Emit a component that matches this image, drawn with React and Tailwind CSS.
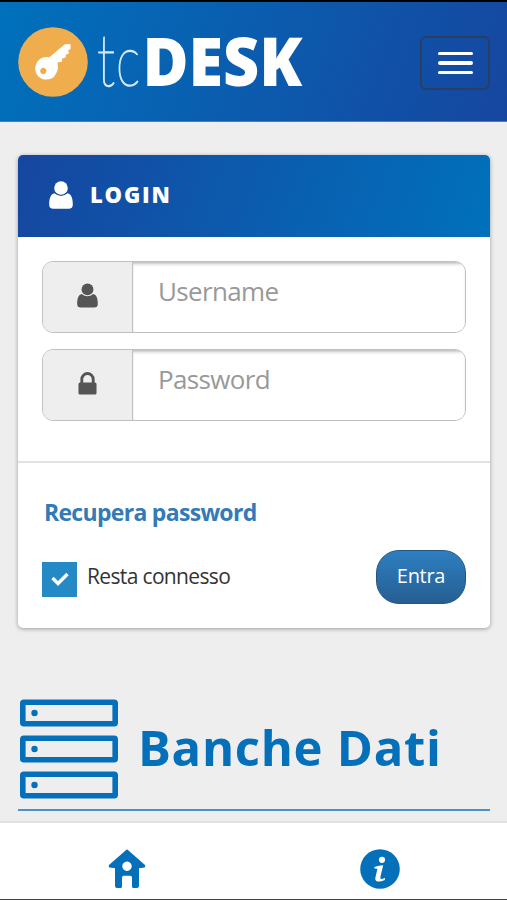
import React, { useState } from 'react';

const UserIcon = ({ className }) => (
  <svg viewBox="0 0 24 28" className={className} fill="currentColor">
    <circle cx="12" cy="7" r="6.8" />
    <path d="M5.4 12.2 C1.6 13 .2 17.4 .2 23.4 Q.2 27.8 4.4 27.8 H19.6 Q23.8 27.8 23.8 23.4 C23.8 17.4 22.4 13 18.6 12.2 Q12 17.6 5.4 12.2 Z" />
  </svg>
);

const LockIcon = ({ className }) => (
  <svg viewBox="0 0 20 24" className={className}>
    <path d="M4 12 V7.5 a6 6 0 0 1 12 0 V12" fill="none" stroke="currentColor" strokeWidth="3" />
    <rect x="0.5" y="11" width="19" height="12.5" rx="1.6" fill="currentColor" />
  </svg>
);

const Logo = () => (
  <svg viewBox="18 2 290 119" className="w-[290px] h-[119px] shrink-0 overflow-visible">
    <circle cx="53" cy="62" r="34.8" fill="#f0ad4e" />
    <path
      fill="#fff"
      fillRule="evenodd"
      d="M64.5 44.6 Q67 43.8 70.6 44.2 L70.6 49 L68.2 50.2 L69 53.6 L65.8 54.8 L65.8 57.6 L62.2 58.6 L62 61.8 L57.4 62.4 L58 66.5 C58 71.5 55.8 73.6 54.5 76.3 C51 80.5 43 80.5 39 77 C35 73.5 34 67 37.2 62 C40 57.6 45.6 56.6 49.4 57.3 Z M43.3 67.8 a3.2 3.2 0 1 0 .01 0 Z"
    />
    <text x="97" y="86" className="font-['Lato'] font-thin" fontSize="73" fill="#d3e8f8" stroke="#d3e8f8" strokeWidth="1.5" textLength="18" lengthAdjust="spacingAndGlyphs">t</text>
    <text x="116" y="86" className="font-['Lato'] font-thin" fontSize="73" fill="#d3e8f8" stroke="#d3e8f8" strokeWidth="1.5" textLength="24" lengthAdjust="spacingAndGlyphs">c</text>
    <text x="142.5" y="86" className="font-['Open_Sans'] font-extrabold" fontSize="67" fill="#fff" textLength="160" lengthAdjust="spacingAndGlyphs">DESK</text>
  </svg>
);

const ServersIcon = () => (
  <svg viewBox="0 0 100 100" className="ml-px -mt-px w-[100px] h-[100px] shrink-0">
    {[0, 36, 72].map((y) => (
      <g key={y} fill="none" stroke="#0570ba" strokeWidth="5.6">
        <rect x="3.8" y={y + 3.2} width="92.4" height="21.6" rx="1" />
        <circle cx="15.5" cy={y + 14} r="3.2" fill="#0570ba" stroke="none" />
      </g>
    ))}
  </svg>
);

const HomeIcon = () => (
  <svg viewBox="0 0 38 40" className="w-[38px] h-[40px]" fill="#0570ba">
    <path
      fillRule="evenodd"
      d="M18.4 .8 Q19 .4 19.6 .8 L37 16 Q38 17.4 36.6 18.4 L31 19.2 V37 Q31 39 29 39 H25.6 Q24 39 24 37.4 V28.6 Q24 26.8 22.2 26.8 H15.8 Q14 26.8 14 28.6 V37.4 Q14 39 12.4 39 H9 Q7 39 7 37 V19.2 L1.4 18.4 Q0 17.4 1 16 Z M19 12.5 a4.7 4.7 0 1 0 .01 0 Z"
    />
  </svg>
);

const InfoIcon = () => (
  <svg viewBox="0 0 40 40" className="w-[40px] h-[40px]">
    <circle cx="20" cy="20" r="19.8" fill="#0570ba" />
    <circle cx="22" cy="10.8" r="3.1" fill="#fff" />
    <path d="M14.5 18 Q18.5 16.4 23.2 16.2 L20.4 28 Q20 30 21.4 30 Q22.6 30 25 28.8 L24.8 31 Q21 32.8 18 32.6 Q14.6 32 15.4 28.4 L17.4 19.8 L14.5 19.6 Z" fill="#fff" />
  </svg>
);

function Field({ icon, type, placeholder }) {
  return (
    <div className="flex h-[72px] rounded-[11px] border border-[#c0c0c0] overflow-hidden">
      <span className="w-[90px] shrink-0 flex items-center justify-center bg-[#eee] border-r border-[#c0c0c0] text-[#555] pb-1">
        {icon}
      </span>
      <input
        type={type}
        placeholder={placeholder}
        className="flex-1 min-w-0 bg-white pl-[25px] pb-[12px] text-[26px] tracking-[-0.65px] placeholder:text-[#999] outline-none shadow-[inset_0_3px_3px_-1px_rgba(0,0,0,0.25)]"
      />
    </div>
  );
}

export default function App() {
  const [remember, setRemember] = useState(true);

  return (
    <div className="w-full h-[900px] flex flex-col overflow-hidden bg-[#eee] font-['Open_Sans','Noto_Sans',sans-serif]">
      <header className="h-[122px] shrink-0 flex items-center justify-between pl-[18px] pr-[17px] border-t-2 border-t-black border-b border-b-[#3187c8] bg-[linear-gradient(110deg,#0071bc_0%,#1646a0_100%)]">
        <Logo />
        <button className="mt-[3px] w-[70px] h-[54px] flex flex-col items-center justify-center gap-[6px] rounded-[6px] border-2 border-[#293f60]">
          <span className="w-[35px] h-[3.4px] rounded-full bg-white" />
          <span className="w-[35px] h-[3.4px] rounded-full bg-white" />
          <span className="w-[35px] h-[3.4px] rounded-full bg-white" />
        </button>
      </header>

      <main className="flex-1 min-h-0 pl-[18px] pr-[17px] pt-[33px]">
        <section className="h-[473px] rounded-[5px] bg-white overflow-hidden shadow-[0_1px_4px_rgba(0,0,0,0.35)]">
          <div className="h-[82px] flex items-center pl-[31px] pb-[2px] text-white bg-[linear-gradient(110deg,#1646a0_0%,#0071bc_100%)]">
            <UserIcon className="w-[24px] h-[28px]" />
            <h2 className="ml-[17px] pb-[2px] text-[22px] font-extrabold tracking-[1.8px]">LOGIN</h2>
          </div>
          <div className="h-[226px] px-6 pt-6 flex flex-col gap-4 border-b-2 border-[#e2e2e2]">
            <Field type="text" placeholder="Username" icon={<UserIcon className="w-[21px] h-[25px]" />} />
            <Field type="password" placeholder="Password" icon={<LockIcon className="w-[19px] h-[23px]" />} />
          </div>
          <div className="px-6 pt-[33px]">
            <a href="#" className="block ml-[2px] text-[23px] leading-[32px] font-bold tracking-[-0.7px] text-[#337ab7]">
              Recupera password
            </a>
            <div className="mt-[22px] flex items-center justify-between">
              <label className="flex items-center gap-[10px] pt-1 text-[21px] tracking-[-0.65px] text-[#333]">
                <input type="checkbox" className="sr-only" checked={remember} onChange={() => setRemember(!remember)} />
                <span className="w-[35px] h-[35px] flex items-center justify-center bg-[#2489c5]">
                  {remember && (
                    <svg viewBox="0 0 20 16" className="w-[20px] h-[16px]">
                      <path d="M2.5 7 L8 12.5 L17.5 3" fill="none" stroke="#fff" strokeWidth="3.4" />
                    </svg>
                  )}
                </span>
                <span className="pb-1">Resta connesso</span>
              </label>
              <button className="w-[90px] h-[54px] rounded-[23px] border-[1.5px] border-[#245580] bg-gradient-to-b from-[#2d7fc1] to-[#265f92] text-white text-[20px] pb-[2px] tracking-[-0.3px]">
                Entra
              </button>
            </div>
          </div>
        </section>

        <div className="mt-[72px] h-[111px] flex items-start border-b-2 border-[#4a92c8]">
          <ServersIcon />
          <h1 className="ml-[19px] mt-[11px] text-[49px] leading-[72px] font-bold tracking-[0.7px] text-[#0570ba] whitespace-nowrap">
            Banche Dati
          </h1>
        </div>
      </main>

      <footer className="h-[79px] shrink-0 flex bg-white border-t-2 border-t-[#e1e1e1] border-b border-b-[#444] pt-[15px]">
        <a href="#" className="flex-1 flex items-center justify-center">
          <HomeIcon />
        </a>
        <a href="#" className="flex-1 flex items-center justify-center">
          <InfoIcon />
        </a>
      </footer>
    </div>
  );
}
